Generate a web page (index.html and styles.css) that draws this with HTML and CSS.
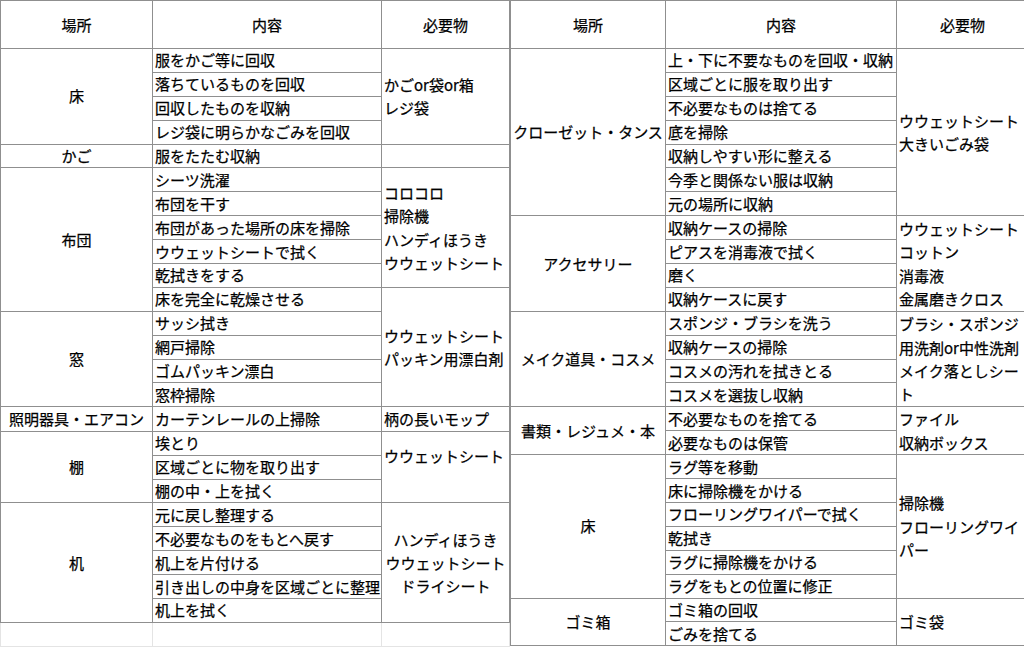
FILE: index.html
```html
<!DOCTYPE html>
<html lang="ja">
<head>
<meta charset="utf-8">
<title>掃除チェックリスト</title>
<link rel="stylesheet" href="styles.css">
</head>
<body>
<div class="sheet">
  <table class="grid grid-left">
    <colgroup><col class="c1"><col class="c2"><col class="c3"></colgroup>
    <tr class="head"><th>場所</th><th>内容</th><th>必要物</th></tr>
    <tr><td class="place" rowspan="4">床</td><td>服をかご等に回収</td><td class="need" rowspan="4">かごor袋or箱<br>レジ袋</td></tr>
    <tr><td>落ちているものを回収</td></tr>
    <tr><td>回収したものを収納</td></tr>
    <tr><td>レジ袋に明らかなごみを回収</td></tr>
    <tr><td class="place">かご</td><td>服をたたむ収納</td><td class="need"></td></tr>
    <tr><td class="place" rowspan="6">布団</td><td>シーツ洗濯</td><td class="need" rowspan="5">コロコロ<br>掃除機<br>ハンディほうき<br>ウウェットシート</td></tr>
    <tr><td>布団を干す</td></tr>
    <tr><td>布団があった場所の床を掃除</td></tr>
    <tr><td>ウウェットシートで拭く</td></tr>
    <tr><td>乾拭きをする</td></tr>
    <tr><td>床を完全に乾燥させる</td><td class="need" rowspan="5">ウウェットシート<br>パッキン用漂白剤</td></tr>
    <tr><td class="place" rowspan="4">窓</td><td>サッシ拭き</td></tr>
    <tr><td>網戸掃除</td></tr>
    <tr><td>ゴムパッキン漂白</td></tr>
    <tr><td>窓枠掃除</td></tr>
    <tr><td class="place">照明器具・エアコン</td><td>カーテンレールの上掃除</td><td class="need">柄の長いモップ</td></tr>
    <tr><td class="place" rowspan="3">棚</td><td>埃とり</td><td class="need" rowspan="3">ウウェットシート<br>&nbsp;</td></tr>
    <tr><td>区域ごとに物を取り出す</td></tr>
    <tr><td>棚の中・上を拭く</td></tr>
    <tr><td class="place" rowspan="5">机</td><td>元に戻し整理する</td><td class="need center" rowspan="5">ハンディほうき<br>ウウェットシート<br>ドライシート</td></tr>
    <tr><td>不必要なものをもとへ戻す</td></tr>
    <tr><td>机上を片付ける</td></tr>
    <tr><td>引き出しの中身を区域ごとに整理</td></tr>
    <tr><td>机上を拭く</td></tr>
    <tr class="blank"><td></td><td></td><td></td></tr>
  </table>
  <table class="grid grid-right">
    <colgroup><col class="r1"><col class="r2"><col class="r3"></colgroup>
    <tr class="head"><th>場所</th><th>内容</th><th>必要物</th></tr>
    <tr><td class="place" rowspan="7">クローゼット・タンス</td><td>上・下に不要なものを回収・収納</td><td class="need" rowspan="7">ウウェットシート<br>大きいごみ袋</td></tr>
    <tr><td>区域ごとに服を取り出す</td></tr>
    <tr><td>不必要なものは捨てる</td></tr>
    <tr><td>底を掃除</td></tr>
    <tr><td>収納しやすい形に整える</td></tr>
    <tr><td>今季と関係ない服は収納</td></tr>
    <tr><td>元の場所に収納</td></tr>
    <tr><td class="place" rowspan="4">アクセサリー</td><td>収納ケースの掃除</td><td class="need" rowspan="4">ウウェットシート<br>コットン<br>消毒液<br>金属磨きクロス</td></tr>
    <tr><td>ピアスを消毒液で拭く</td></tr>
    <tr><td>磨く</td></tr>
    <tr><td>収納ケースに戻す</td></tr>
    <tr><td class="place" rowspan="4">メイク道具・コスメ</td><td>スポンジ・ブラシを洗う</td><td class="need" rowspan="4">ブラシ・スポンジ<br>用洗剤or中性洗剤<br>メイク落としシー<br>ト</td></tr>
    <tr><td>収納ケースの掃除</td></tr>
    <tr><td>コスメの汚れを拭きとる</td></tr>
    <tr><td>コスメを選抜し収納</td></tr>
    <tr><td class="place" rowspan="2">書類・レジュメ・本</td><td>不必要なものを捨てる</td><td class="need" rowspan="2">ファイル<br>収納ボックス</td></tr>
    <tr><td>必要なものは保管</td></tr>
    <tr><td class="place" rowspan="6">床</td><td>ラグ等を移動</td><td class="need" rowspan="6">掃除機<br>フローリングワイ<br>パー</td></tr>
    <tr><td>床に掃除機をかける</td></tr>
    <tr><td>フローリングワイパーで拭く</td></tr>
    <tr><td>乾拭き</td></tr>
    <tr><td>ラグに掃除機をかける</td></tr>
    <tr><td>ラグをもとの位置に修正</td></tr>
    <tr><td class="place" rowspan="2">ゴミ箱</td><td>ゴミ箱の回収</td><td class="need" rowspan="2">ゴミ袋</td></tr>
    <tr><td>ごみを捨てる</td></tr>
  </table>
</div>
</body>
</html>
```
FILE: styles.css
```css
html, body {
  margin: 0;
  padding: 0;
  background: #ffffff;
}
.sheet {
  display: flex;
  align-items: flex-start;
  width: 1024px;
  height: 648px;
  overflow: hidden;
  font-family: "Noto Sans CJK JP", "Noto Sans", sans-serif;
  font-size: 15px;
  color: #000000;
  -webkit-text-stroke: 0.25px #000000;
}
.grid {
  border-collapse: collapse;
  table-layout: fixed;
  flex: none;
}
.grid-left { width: 509px; }
.grid-right { width: 518px; }
.c1 { width: 152px; }
.c2 { width: 229px; }
.c3 { width: 128px; }
.r1 { width: 155px; }
.r2 { width: 231px; }
.r3 { width: 132px; }
.grid tr { height: 23.9px; }
.grid tr.head { height: 48px; }
.grid th, .grid td {
  border: 1px solid #8f8f8f;
  padding: 0 2px;
  line-height: 20px;
  white-space: nowrap;
  overflow: hidden;
  vertical-align: middle;
  text-align: left;
}
.grid th {
  font-weight: normal;
  text-align: center;
}
.grid td.need { line-height: 23.4px; }
.grid td.place { text-align: center; }
.grid td.center { text-align: center; }
.grid tr.blank td {
  border-color: #e4e4e4;
  border-top-color: #8f8f8f;
}
.grid-left tr.blank td:last-child { border-right-color: #e4e4e4; }
```
